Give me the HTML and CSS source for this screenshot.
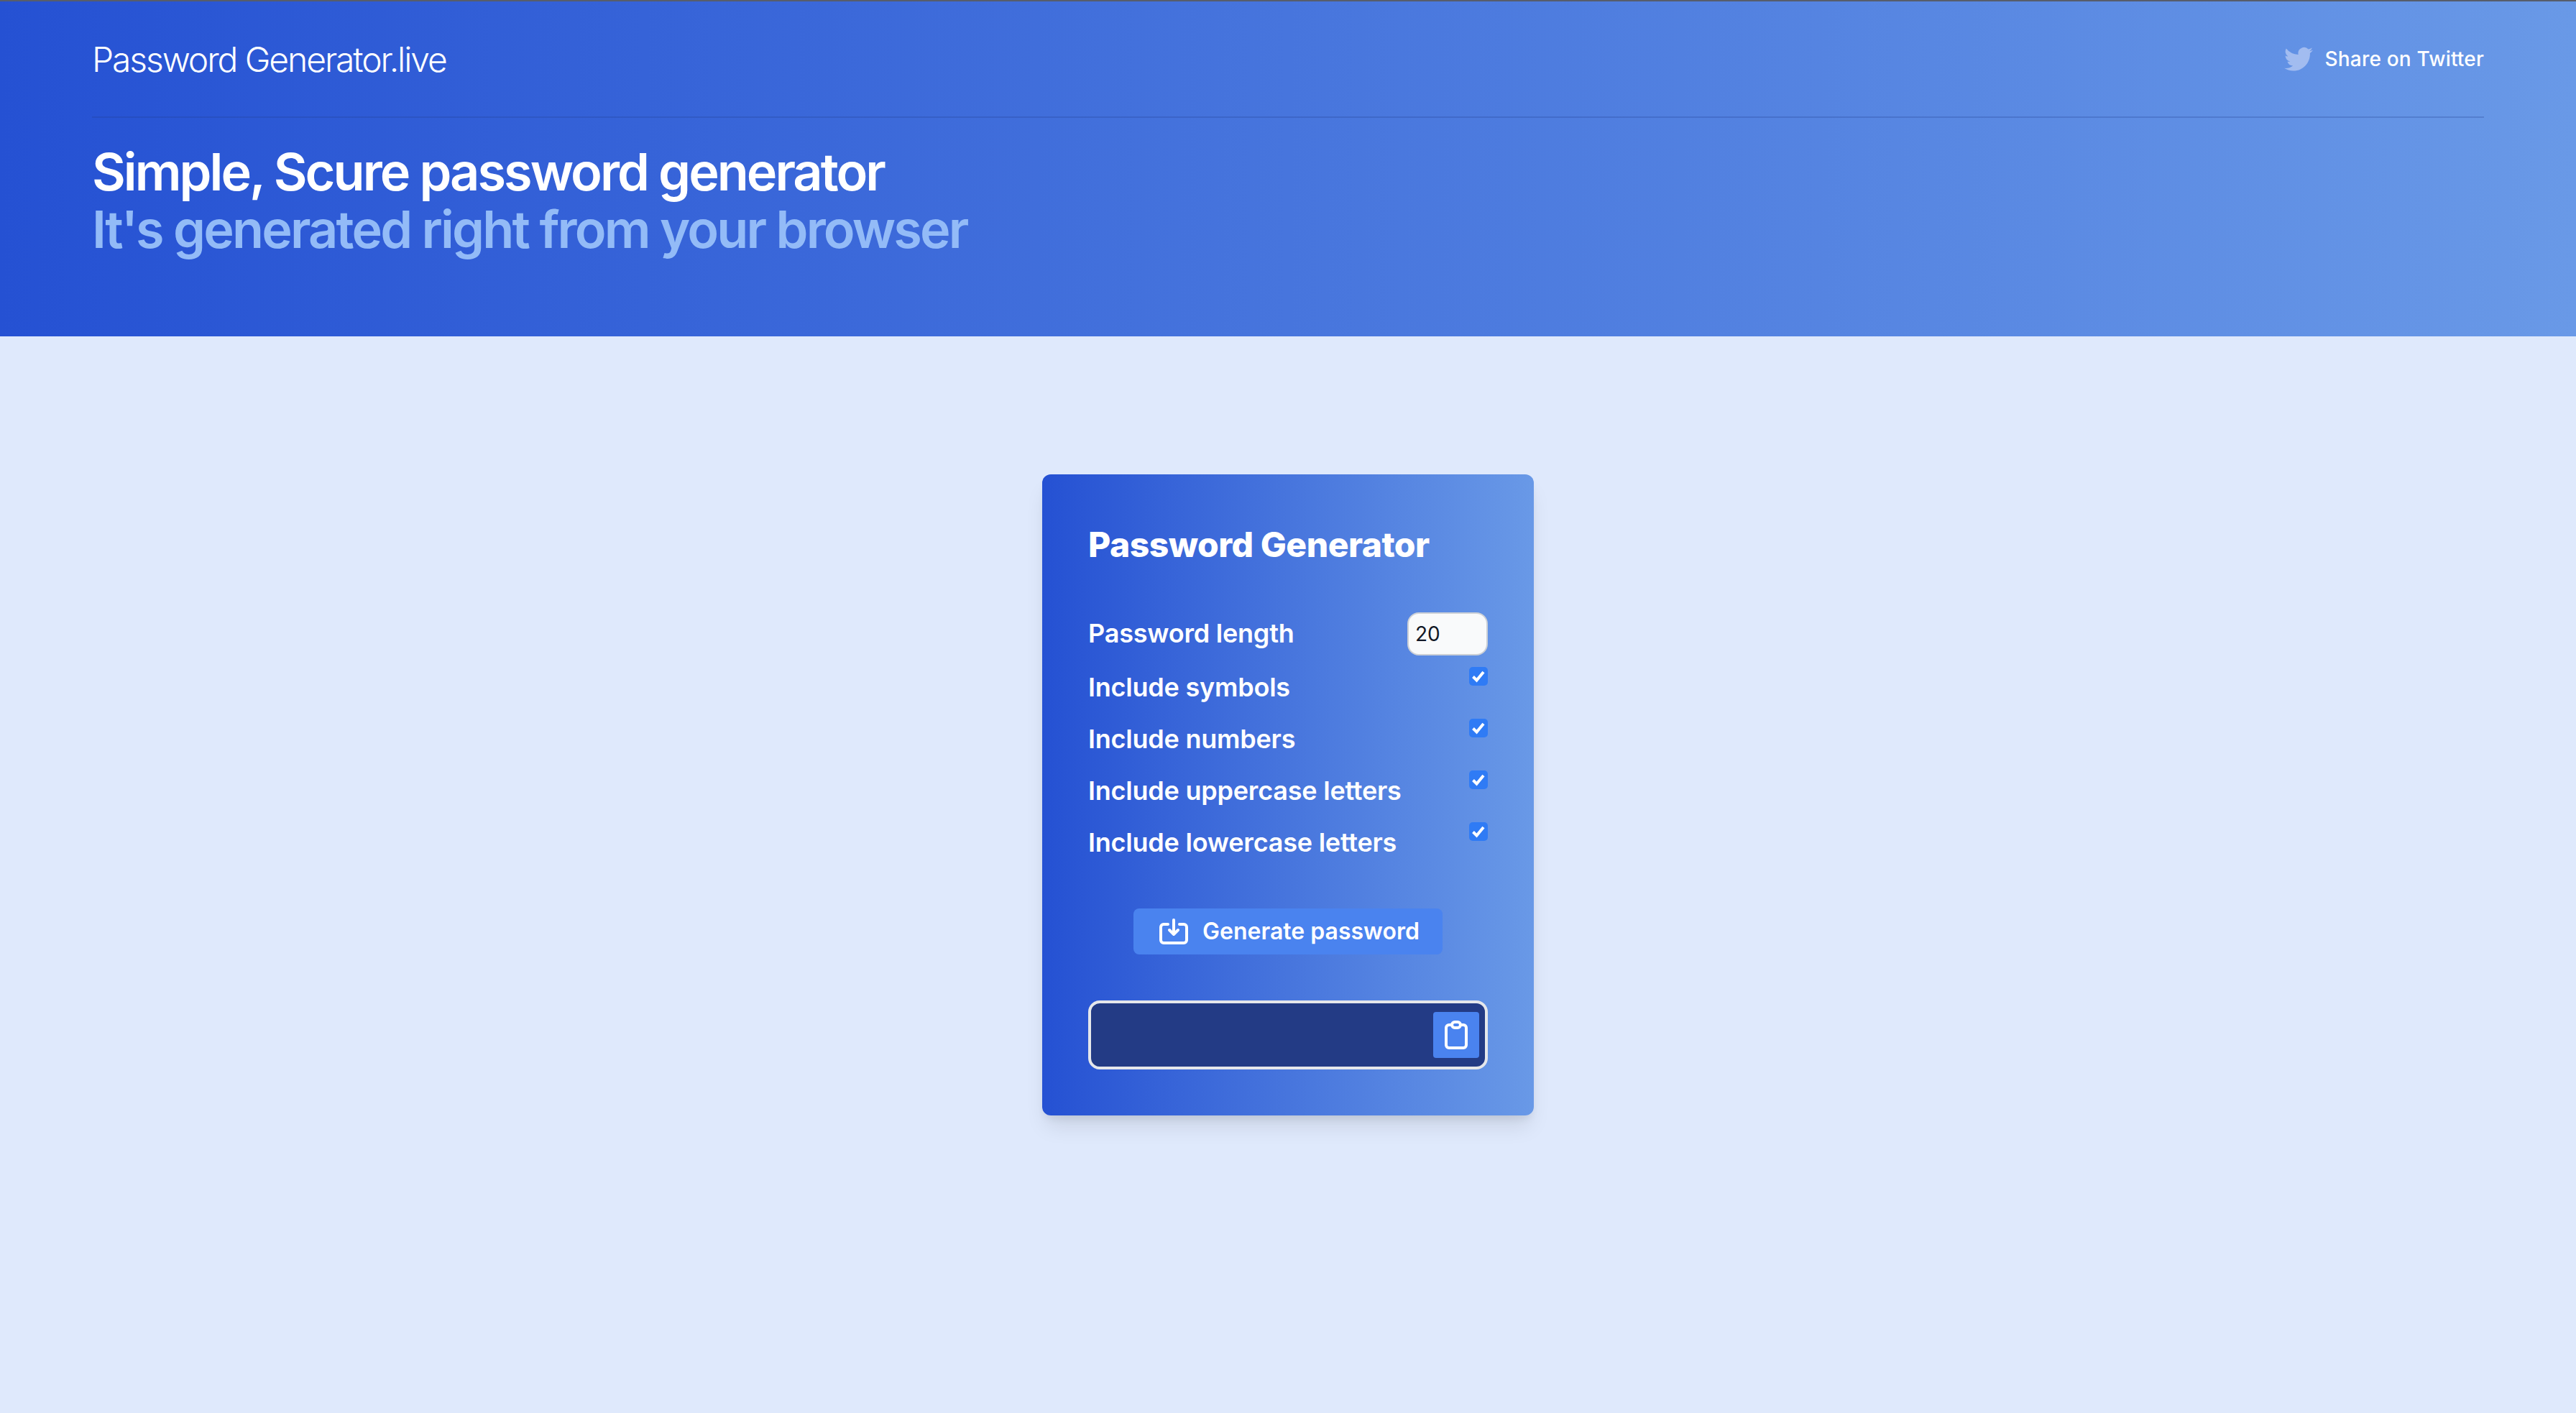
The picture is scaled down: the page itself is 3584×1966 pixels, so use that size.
FILE: index.html
```html
<!DOCTYPE html>
<html>
<head>
    <title>Password Generator.live</title>
    <link rel="stylesheet" href="styles.css">
</head>
<body>
    <header class="hero">
        <nav class="nav">
            <a class="logo" href="#">Password Generator.live</a>
            <a class="share" href="#">
                <svg class="share-icon" viewBox="0 0 20 20" fill="currentColor"><path d="M6.29 18.251c7.547 0 11.675-6.253 11.675-11.675 0-.178 0-.355-.012-.53A8.348 8.348 0 0020 3.92a8.19 8.19 0 01-2.357.646 4.118 4.118 0 001.804-2.27 8.224 8.224 0 01-2.605.996 4.107 4.107 0 00-6.993 3.743 11.65 11.65 0 01-8.457-4.287 4.106 4.106 0 001.27 5.477A4.073 4.073 0 01.8 7.713v.052a4.105 4.105 0 003.292 4.022 4.095 4.095 0 01-1.853.07 4.108 4.108 0 003.834 2.85A8.233 8.233 0 010 16.407a11.616 11.616 0 006.29 1.84"/></svg>
                <span>Share on Twitter</span>
            </a>
        </nav>
        <h1 class="headline">
            <span class="headline-main">Simple, Scure password generator</span>
            <span class="headline-sub">It's generated right from your browser</span>
        </h1>
    </header>

    <main class="content">
        <section class="card">
            <h2 class="card-title">Password Generator</h2>

            <div class="row row-length">
                <label for="length">Password length</label>
                <input class="length-input" id="length" type="number" value="20">
            </div>
            <div class="row">
                <label for="symbols">Include symbols</label>
                <input class="check" id="symbols" type="checkbox" checked>
            </div>
            <div class="row">
                <label for="numbers">Include numbers</label>
                <input class="check" id="numbers" type="checkbox" checked>
            </div>
            <div class="row">
                <label for="uppercase">Include uppercase letters</label>
                <input class="check" id="uppercase" type="checkbox" checked>
            </div>
            <div class="row">
                <label for="lowercase">Include lowercase letters</label>
                <input class="check" id="lowercase" type="checkbox" checked>
            </div>

            <button class="generate" type="button">
                <svg class="icon" viewBox="0 0 24 24" fill="none" stroke="currentColor" stroke-width="2" stroke-linecap="round" stroke-linejoin="round"><path d="M8 7H5a2 2 0 00-2 2v9a2 2 0 002 2h14a2 2 0 002-2V9a2 2 0 00-2-2h-3m-1 4l-3 3m0 0l-3-3m3 3V4"/></svg>
                <span>Generate password</span>
            </button>

            <div class="output">
                <button class="copy" type="button">
                    <svg class="icon" viewBox="0 0 24 24" fill="none" stroke="currentColor" stroke-width="2" stroke-linecap="round" stroke-linejoin="round"><path d="M9 5H7a2 2 0 00-2 2v12a2 2 0 002 2h10a2 2 0 002-2V7a2 2 0 00-2-2h-2M9 5a2 2 0 002 2h2a2 2 0 002-2M9 5a2 2 0 012-2h2a2 2 0 012 2"/></svg>
                </button>
            </div>
        </section>
    </main>
</body>
</html>
```

FILE: styles.css
```css
* {
    box-sizing: border-box;
}

html,
body {
    margin: 0;
    padding: 0;
}

body {
    min-height: 1966px;
    background-color: #dfe9fc;
    font-family: Inter, "Noto Sans", sans-serif;
    color: #fff;
}

a {
    color: inherit;
    text-decoration: none;
}

.hero {
    height: 468px;
    padding: 0 128px;
    border-top: 2px solid #575d6b;
    background: linear-gradient(to right, #2551d3, #6999e7);
}

.nav {
    display: flex;
    justify-content: space-between;
    align-items: center;
    height: 162px;
    border-bottom: 2px solid rgba(30, 58, 138, 0.25);
}

.logo {
    padding-top: 2px;
    font-size: 48px;
    font-weight: 300;
    line-height: 64px;
    letter-spacing: -2.1px;
}

.share {
    display: flex;
    align-items: center;
    gap: 16px;
    font-size: 28px;
    font-weight: 500;
    line-height: 40px;
    letter-spacing: 0.2px;
}

.share-icon {
    width: 40px;
    height: 40px;
    color: #a2bcf0;
}

.headline {
    margin: 35px 0 0;
    font-size: 72px;
    font-weight: 600;
    line-height: 80px;
    letter-spacing: -2.97px;
}

.headline-main,
.headline-sub {
    display: block;
}

.headline-sub {
    color: #93bbf7;
    letter-spacing: -2.83px;
}

.content {
    display: flex;
    justify-content: center;
    padding-top: 192px;
}

.card {
    display: flex;
    flex-direction: column;
    width: 684px;
    padding: 64px;
    border-radius: 12px;
    background: linear-gradient(to right, #2551d3, #6999e7);
    box-shadow: 0 20px 30px -6px rgba(0, 0, 0, 0.1), 0 8px 12px -4px rgba(0, 0, 0, 0.08);
}

.card-title {
    margin: 0 0 64px;
    padding-top: 2px;
    height: 64px;
    font-size: 48px;
    font-weight: 800;
    line-height: 64px;
    letter-spacing: -0.5px;
}

.row {
    display: flex;
    justify-content: space-between;
    align-items: flex-start;
    min-height: 56px;
    margin-bottom: 16px;
    font-size: 36px;
    font-weight: 600;
    line-height: 56px;
    letter-spacing: -0.22px;
}

.row-length {
    align-items: center;
}

.row-length label {
    margin-top: -2px;
}

.length-input {
    width: 112px;
    height: 60px;
    padding: 0 9px;
    border: 2px solid #ccd0d6;
    border-radius: 16px;
    background-color: #f9fafb;
    font-family: inherit;
    font-size: 28px;
    color: #111827;
    outline: none;
}

.check {
    appearance: none;
    width: 26px;
    height: 26px;
    margin: 0;
    border-radius: 5px;
    background-color: #2f7bf5;
    background-image: url("data:image/svg+xml,%3Csvg xmlns='http://www.w3.org/2000/svg' viewBox='0 0 26 26'%3E%3Cpath d='M5.5 13.5l5 5L20 7' fill='none' stroke='white' stroke-width='4'/%3E%3C/svg%3E");
}

.generate {
    display: flex;
    align-items: center;
    gap: 16px;
    align-self: center;
    margin: 48px 0 64px;
    padding: 8px 32px;
    border: 0;
    border-radius: 8px;
    background-color: #4a83ef;
    font-family: inherit;
    font-size: 32px;
    font-weight: 600;
    line-height: 48px;
    color: #fff;
}

.icon {
    display: block;
    width: 48px;
    height: 48px;
}

.output {
    display: flex;
    justify-content: flex-end;
    align-items: center;
    height: 96px;
    padding-right: 8px;
    border: 4px solid #e5e7eb;
    border-radius: 16px;
    background-color: #233b85;
}

.copy {
    padding: 8px;
    border: 0;
    border-radius: 4px;
    background-color: #4a83ef;
    color: #fff;
}
```
